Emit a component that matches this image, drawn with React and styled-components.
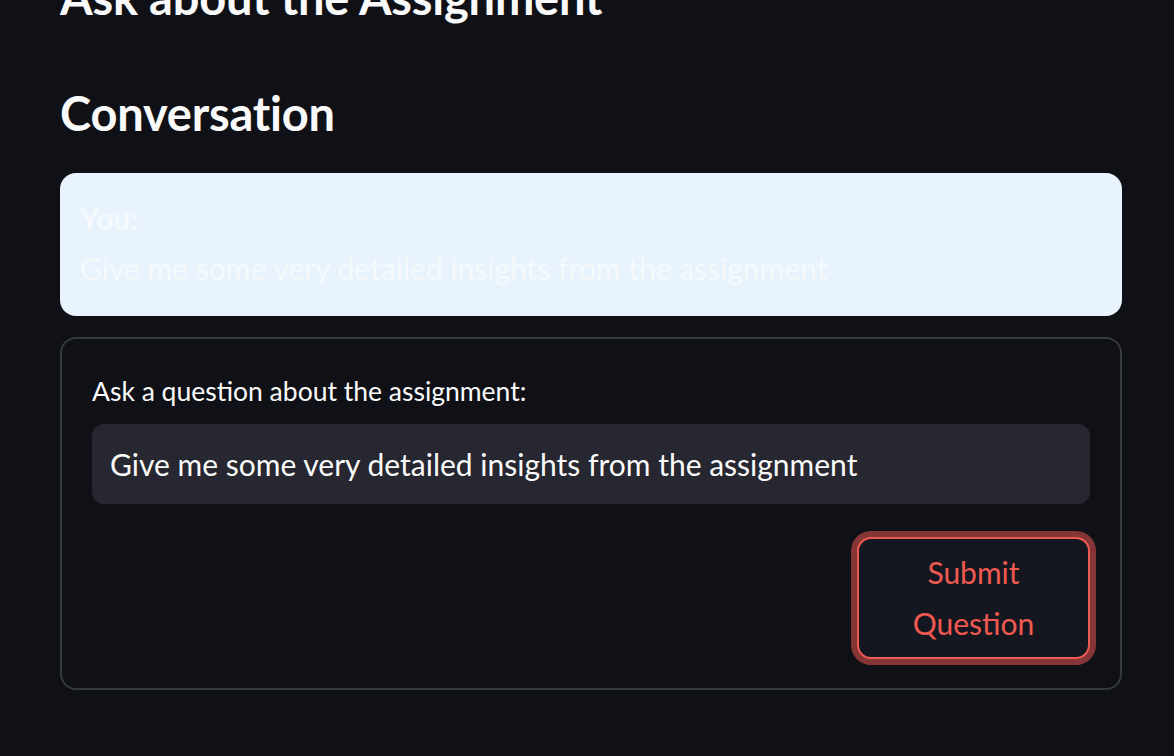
import React from 'react';
import styled, { createGlobalStyle } from 'styled-components';

const GlobalStyle = createGlobalStyle`
  html, body {
    margin: 0;
    padding: 0;
    background: #0f1116;
  }
  body {
    font-family: 'Lato', 'Noto Sans', sans-serif;
    color: #fafafa;
    overflow: hidden;
  }
`;

const Page = styled.div`
  width: 1062px;
  padding: 0 0 0 60px;
`;

const Heading = styled.h2`
  margin: ${(props) => (props.top ? '-35px 0 0' : '0')};
  font-size: 47px;
  font-weight: 700;
  line-height: 64px;
  letter-spacing: -0.2px;
  color: #fafafa;
`;

const Section = styled.div`
  display: flex;
  flex-direction: column;
  gap: 21px;
`;

const Spacer = styled.div`
  height: ${(props) => props.h}px;
`;

const Message = styled.div`
  display: flex;
  flex-direction: column;
  padding: 20px 20px 23px;
  background: #e8f3fe;
  border-radius: 16px;
  color: #f6f9fc;
  font-size: 30px;
  line-height: 50px;
`;

const Who = styled.div`
  font-weight: 700;
`;

const Form = styled.form`
  display: flex;
  flex-direction: column;
  padding: 34px 30px 29px;
  border: 2px solid #373940;
  border-radius: 16px;
`;

const Label = styled.label`
  font-size: 26.5px;
  line-height: 36px;
  color: #fafafa;
  margin-bottom: 15px;
`;

const Input = styled.input`
  height: 80px;
  box-sizing: border-box;
  padding: 0 18px;
  border: none;
  border-radius: 12px;
  background: #262730;
  color: #fafafa;
  font-family: inherit;
  font-size: 30px;
  outline: none;
`;

const Actions = styled.div`
  display: flex;
  justify-content: flex-end;
  margin-top: 33px;
`;

const SubmitButton = styled.button`
  width: 233px;
  height: 122px;
  box-sizing: border-box;
  padding: 0 36px;
  border: 2px solid #ec5a51;
  border-radius: 14px;
  box-shadow: 0 0 0 6px #863536;
  background: #141720;
  color: #f0594f;
  font-family: inherit;
  font-size: 30px;
  line-height: 51px;
  cursor: pointer;
`;

export default function App() {
  const question = 'Give me some very detailed insights from the assignment';

  return (
    <>
      <GlobalStyle />
      <Page>
        <Heading top>Ask about the Assignment</Heading>
        <Spacer h={52} />
        <Heading>Conversation</Heading>
        <Spacer h={28} />
        <Section>
          <Message>
            <Who>You:</Who>
            <div>{question}</div>
          </Message>
          <Form onSubmit={(e) => e.preventDefault()}>
            <Label>Ask a question about the assignment:</Label>
            <Input defaultValue={question} />
            <Actions>
              <SubmitButton type="submit">Submit Question</SubmitButton>
            </Actions>
          </Form>
        </Section>
      </Page>
    </>
  );
}
